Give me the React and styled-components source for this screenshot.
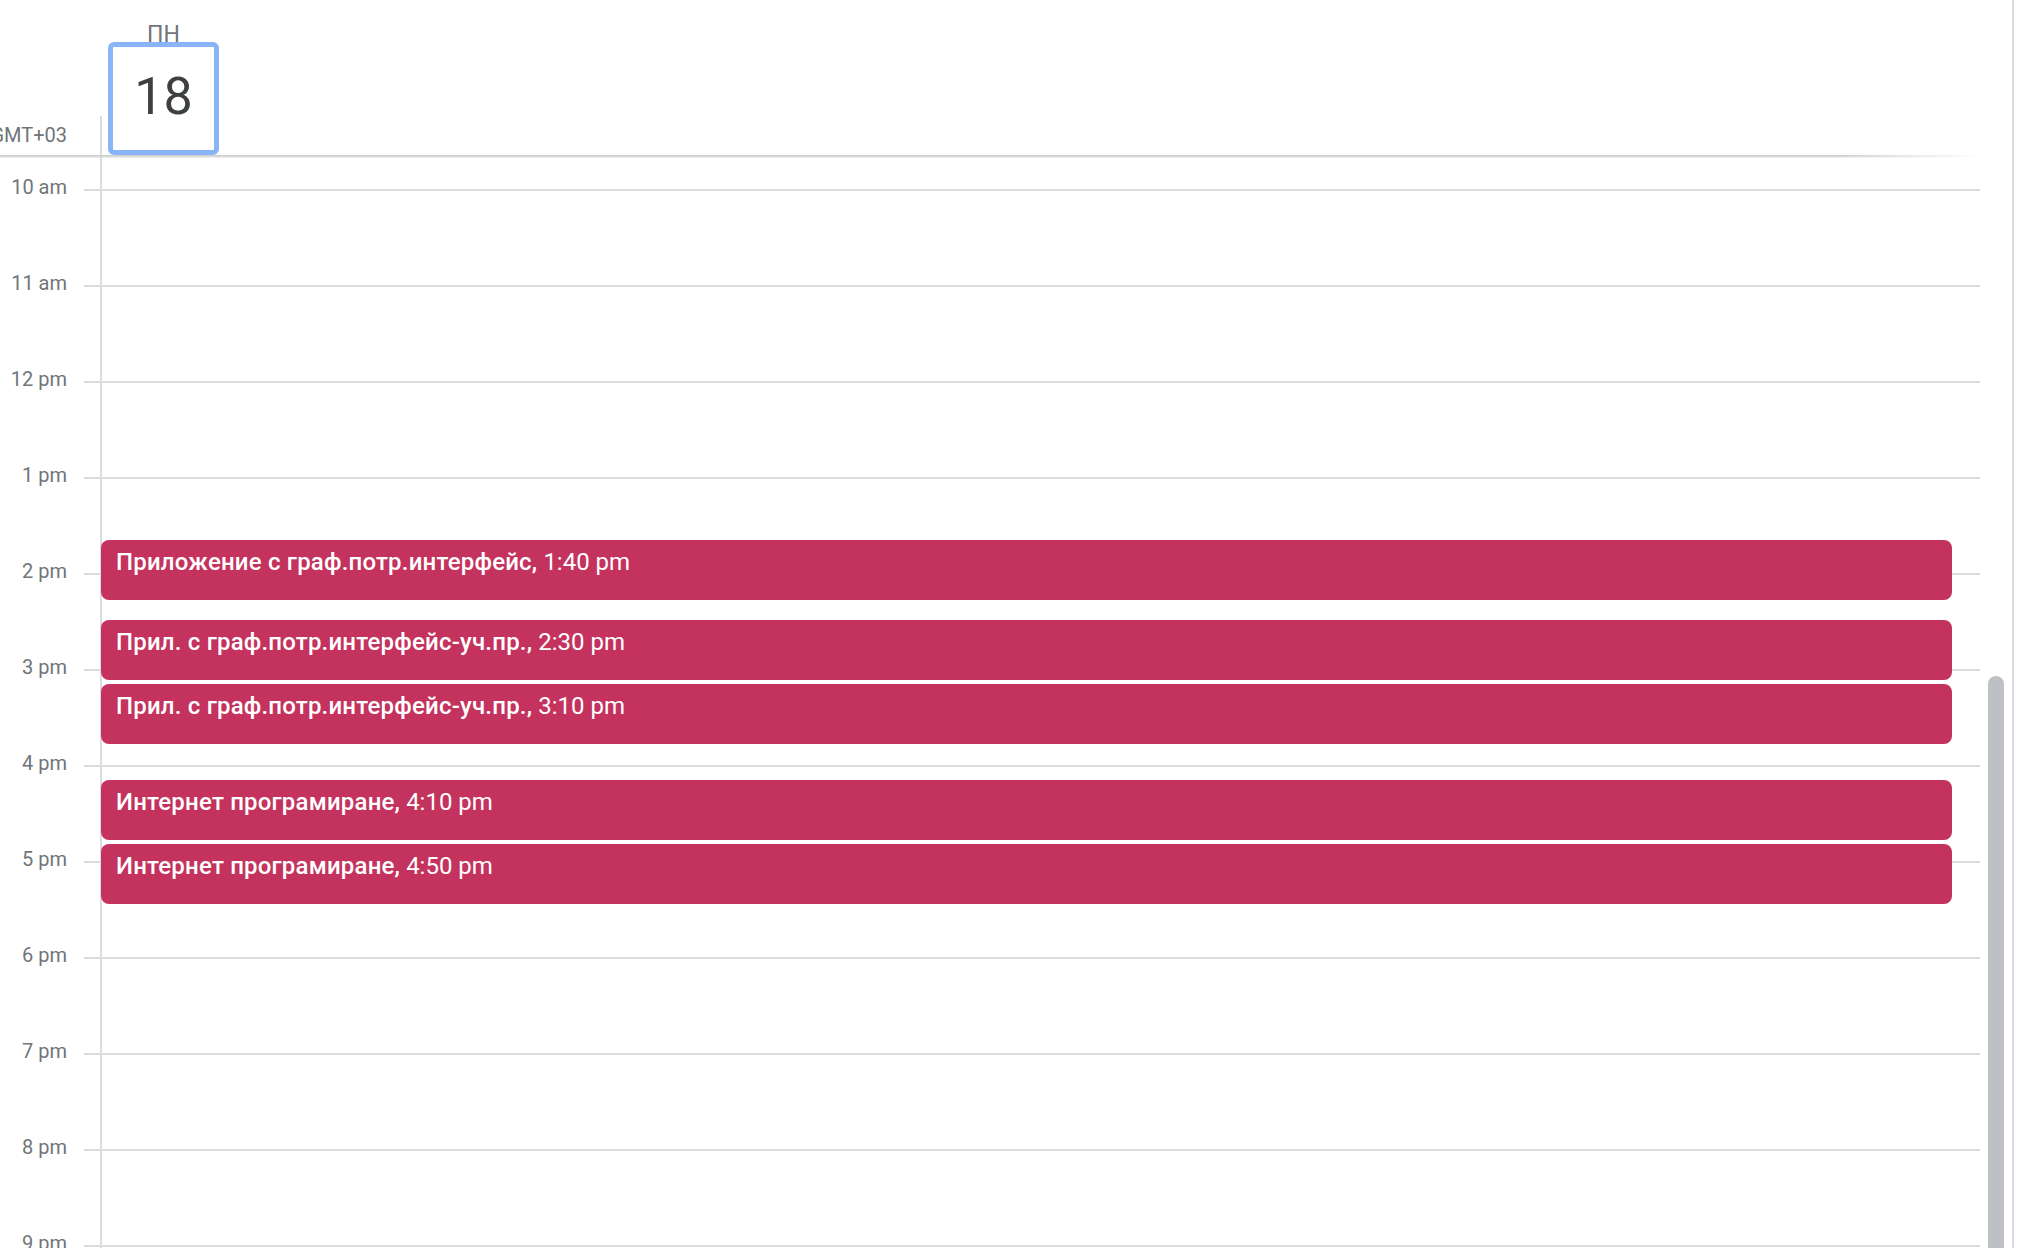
import React from "react";
import styled, { createGlobalStyle } from "styled-components";

const HOUR = 96;
const FIRST_HOUR = 10;
const TOP_GAP = 32;

const GlobalStyle = createGlobalStyle`
  html, body {
    margin: 0;
    padding: 0;
    background: #fff;
  }
  body {
    font-family: Roboto, "Noto Sans", "Liberation Sans", sans-serif;
  }
`;

const Page = styled.div`
  display: flex;
  height: 100vh;
  overflow: hidden;
  background: #fff;
`;

const Main = styled.div`
  flex: 1;
  min-width: 0;
  display: flex;
  flex-direction: column;
`;

const EdgeLine = styled.div`
  width: 2px;
  flex-shrink: 0;
  background: #dadce0;
  margin-right: 6px;
`;

const Header = styled.div`
  display: flex;
  height: 155px;
  flex-shrink: 0;
`;

const HeaderGutter = styled.div`
  width: 100px;
  flex-shrink: 0;
  display: flex;
  justify-content: flex-end;
  align-items: flex-end;
`;

const Zone = styled.div`
  font-size: 20px;
  line-height: 24px;
  color: #70757a;
  white-space: nowrap;
  margin: 0 33px 8px 0;
`;

const Stub = styled.div`
  width: 2px;
  height: 39px;
  align-self: flex-end;
  background: #dadce0;
`;

const DayHead = styled.div`
  width: 111px;
  margin-left: 6px;
  padding-top: 27px;
  display: flex;
  flex-direction: column;
  align-items: center;
`;

const Weekday = styled.div`
  font-size: 23px;
  line-height: 15px;
  height: 15px;
  color: #70757a;
`;

const DateBox = styled.div`
  box-sizing: border-box;
  width: 111px;
  height: 113px;
  border: 5px solid #8ab4f8;
  border-radius: 6px;
  display: flex;
  align-items: center;
  justify-content: center;
  padding-bottom: 3px;
  font-size: 52px;
  line-height: 52px;
  color: #3c4043;
`;

const Divider = styled.div`
  height: 3px;
  margin-right: 32px;
  flex-shrink: 0;
  background: linear-gradient(to bottom, #cfcfcf 0, #cfcfcf 1px, #e4e4e4 2px, #f6f6f6 3px);
  -webkit-mask-image: linear-gradient(to right, #000 calc(100% - 140px), transparent);
  mask-image: linear-gradient(to right, #000 calc(100% - 140px), transparent);
`;

const Body = styled.div`
  flex: 1;
  min-height: 0;
  display: flex;
  overflow: hidden;
  margin-top: -1px;
`;

const Gutter = styled.div`
  width: 100px;
  flex-shrink: 0;
  padding-top: ${TOP_GAP}px;
`;

const HourMark = styled.div`
  height: ${HOUR}px;
  display: flex;
  align-items: flex-start;
`;

const HourLabel = styled.div`
  width: 67px;
  margin-top: -14px;
  text-align: right;
  font-size: 20px;
  line-height: 24px;
  color: #70757a;
  white-space: nowrap;
`;

const Tick = styled.div`
  width: 16px;
  height: 2px;
  margin-left: 17px;
  background: #dadce0;
`;

const DayColumn = styled.div`
  flex: 1;
  position: relative;
  border-left: 2px solid #dadce0;
  padding-top: ${TOP_GAP}px;
`;

const Slot = styled.div`
  box-sizing: border-box;
  height: ${HOUR}px;
  border-top: 2px solid #dadce0;
`;

const Event = styled.div`
  position: absolute;
  left: -1px;
  right: 28px;
  height: 60px;
  box-sizing: border-box;
  padding: 8px 15px;
  border-radius: 8px;
  background: #c4325e;
  color: #fff;
  font-size: 24px;
  line-height: 28px;
  white-space: nowrap;
  overflow: hidden;
`;

const EventTitle = styled.span`
  font-weight: 500;
  letter-spacing: 0.2px;
`;

const ScrollTrack = styled.div`
  width: 32px;
  flex-shrink: 0;
  box-sizing: border-box;
  padding: 519px 8px 0;
`;

const Thumb = styled.div`
  height: 800px;
  border-radius: 8px;
  background: #bdc1c6;
`;

const hours = [10, 11, 12, 13, 14, 15, 16, 17, 18, 19, 20, 21, 22];

const hourText = (h) => {
  const suffix = h < 12 ? "am" : "pm";
  const n = h % 12 === 0 ? 12 : h % 12;
  return `${n} ${suffix}`;
};

const events = [
  { title: "Приложение с граф.потр.интерфейс", h: 13, m: 40, label: "1:40 pm" },
  { title: "Прил. с граф.потр.интерфейс-уч.пр.", h: 14, m: 30, label: "2:30 pm" },
  { title: "Прил. с граф.потр.интерфейс-уч.пр.", h: 15, m: 10, label: "3:10 pm" },
  { title: "Интернет програмиране", h: 16, m: 10, label: "4:10 pm" },
  { title: "Интернет програмиране", h: 16, m: 50, label: "4:50 pm" },
];

const eventTop = (e) =>
  TOP_GAP + ((e.h - FIRST_HOUR) * 60 + e.m) * (HOUR / 60) - 1;

export default function App() {
  return (
    <Page>
      <GlobalStyle />
      <Main>
        <Header>
          <HeaderGutter>
            <Zone>GMT+03</Zone>
          </HeaderGutter>
          <Stub />
          <DayHead>
            <Weekday>ПН</Weekday>
            <DateBox>18</DateBox>
          </DayHead>
        </Header>
        <Divider />
        <Body>
          <Gutter>
            {hours.map((h) => (
              <HourMark key={h}>
                <HourLabel>{hourText(h)}</HourLabel>
                <Tick />
              </HourMark>
            ))}
          </Gutter>
          <DayColumn>
            {hours.map((h) => (
              <Slot key={h} />
            ))}
            {events.map((e, i) => (
              <Event key={i} style={{ top: eventTop(e) }}>
                <EventTitle>{e.title},</EventTitle> {e.label}
              </Event>
            ))}
          </DayColumn>
          <ScrollTrack>
            <Thumb />
          </ScrollTrack>
        </Body>
      </Main>
      <EdgeLine />
    </Page>
  );
}
